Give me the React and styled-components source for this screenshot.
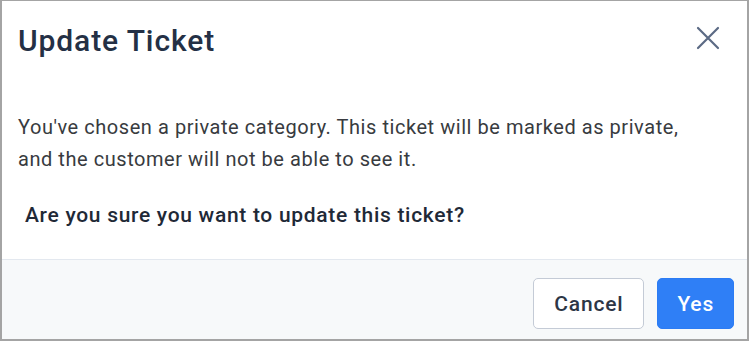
import React from 'react'
import styled, { createGlobalStyle } from 'styled-components'

const Global = createGlobalStyle`
  html, body {
    margin: 0;
    padding: 0;
    background: #ffffff;
  }
  body {
    font-family: Roboto, "Liberation Sans", Arial, sans-serif;
  }
`

const Frame = styled.div`
  box-sizing: border-box;
  width: 749px;
  height: 341px;
  border-style: solid;
  border-color: #a4a4a4;
  border-width: 1px 2px 2px 2px;
  background: #ffffff;
  display: flex;
  flex-direction: column;
`

const Header = styled.div`
  display: flex;
  align-items: center;
  justify-content: space-between;
  padding: 22px 27px 0 16px;
`

const Title = styled.h2`
  margin: 0;
  font-size: 30px;
  line-height: 36px;
  font-weight: 500;
  letter-spacing: 0.9px;
  color: #243045;
`

const CloseButton = styled.button`
  border: none;
  background: none;
  padding: 0;
  margin-top: -6px;
  width: 24px;
  height: 24px;
  display: flex;
  align-items: center;
  justify-content: center;
  color: #5b6a84;
  cursor: pointer;
`

const Body = styled.div`
  padding: 52px 16px 0 16px;
`

const Message = styled.p`
  margin: 0;
  max-width: 672px;
  font-size: 20px;
  line-height: 32px;
  letter-spacing: 0.55px;
  color: #383b40;
`

const Question = styled.p`
  margin: 24px 0 0 7px;
  font-size: 21px;
  line-height: 32px;
  font-weight: 500;
  letter-spacing: 0.7px;
  color: #1f2937;
`

const Footer = styled.div`
  margin-top: auto;
  height: 80px;
  box-sizing: border-box;
  border-top: 1px solid #e3e8ef;
  background: #f7f9fa;
  display: flex;
  justify-content: flex-end;
  align-items: flex-start;
  gap: 13px;
  padding: 18px 13px 0 0;
`

const Button = styled.button`
  height: 51px;
  box-sizing: border-box;
  padding: 0 ${p => (p.$primary ? '19px' : '20px')};
  border-radius: 5px;
  font-family: inherit;
  font-size: 21px;
  font-weight: 500;
  letter-spacing: 0.8px;
  cursor: pointer;
  border: 1px solid ${p => (p.$primary ? '#2c7cf4' : '#c4cbd6')};
  background: ${p => (p.$primary ? '#2f7ff6' : '#ffffff')};
  color: ${p => (p.$primary ? '#ffffff' : '#2d3646')};
`

export default function App() {
  return (
    <>
      <Global />
      <Frame>
        <Header>
          <Title>Update Ticket</Title>
          <CloseButton aria-label="Close">
            <svg width="24" height="24" viewBox="0 0 24 24" fill="none" stroke="currentColor" strokeWidth="2.2" strokeLinecap="round">
              <path d="M2 2 L22 22 M22 2 L2 22" />
            </svg>
          </CloseButton>
        </Header>
        <Body>
          <Message>
            You've chosen a private category. This ticket will be marked as private,
            and the customer will not be able to see it.
          </Message>
          <Question>Are you sure you want to update this ticket?</Question>
        </Body>
        <Footer>
          <Button>Cancel</Button>
          <Button $primary>Yes</Button>
        </Footer>
      </Frame>
    </>
  )
}
